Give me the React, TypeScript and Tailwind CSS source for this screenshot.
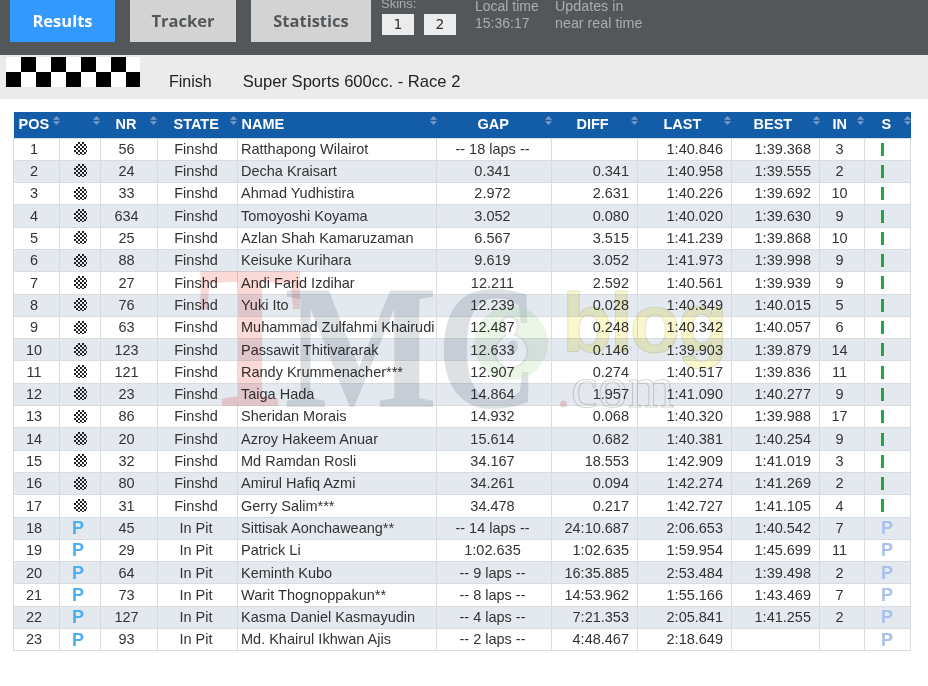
const rows = [
  ['1', 'f', '56', 'Finshd', 'Ratthapong Wilairot', '-- 18 laps --', '', '1:40.846', '1:39.368', '3'],
  ['2', 'f', '24', 'Finshd', 'Decha Kraisart', '0.341', '0.341', '1:40.958', '1:39.555', '2'],
  ['3', 'f', '33', 'Finshd', 'Ahmad Yudhistira', '2.972', '2.631', '1:40.226', '1:39.692', '10'],
  ['4', 'f', '634', 'Finshd', 'Tomoyoshi Koyama', '3.052', '0.080', '1:40.020', '1:39.630', '9'],
  ['5', 'f', '25', 'Finshd', 'Azlan Shah Kamaruzaman', '6.567', '3.515', '1:41.239', '1:39.868', '10'],
  ['6', 'f', '88', 'Finshd', 'Keisuke Kurihara', '9.619', '3.052', '1:41.973', '1:39.998', '9'],
  ['7', 'f', '27', 'Finshd', 'Andi Farid Izdihar', '12.211', '2.592', '1:40.561', '1:39.939', '9'],
  ['8', 'f', '76', 'Finshd', 'Yuki Ito', '12.239', '0.028', '1:40.349', '1:40.015', '5'],
  ['9', 'f', '63', 'Finshd', 'Muhammad Zulfahmi Khairudi', '12.487', '0.248', '1:40.342', '1:40.057', '6'],
  ['10', 'f', '123', 'Finshd', 'Passawit Thitivararak', '12.633', '0.146', '1:39.903', '1:39.879', '14'],
  ['11', 'f', '121', 'Finshd', 'Randy Krummenacher***', '12.907', '0.274', '1:40.517', '1:39.836', '11'],
  ['12', 'f', '23', 'Finshd', 'Taiga Hada', '14.864', '1.957', '1:41.090', '1:40.277', '9'],
  ['13', 'f', '86', 'Finshd', 'Sheridan Morais', '14.932', '0.068', '1:40.320', '1:39.988', '17'],
  ['14', 'f', '20', 'Finshd', 'Azroy Hakeem Anuar', '15.614', '0.682', '1:40.381', '1:40.254', '9'],
  ['15', 'f', '32', 'Finshd', 'Md Ramdan Rosli', '34.167', '18.553', '1:42.909', '1:41.019', '3'],
  ['16', 'f', '80', 'Finshd', 'Amirul Hafiq Azmi', '34.261', '0.094', '1:42.274', '1:41.269', '2'],
  ['17', 'f', '31', 'Finshd', 'Gerry Salim***', '34.478', '0.217', '1:42.727', '1:41.105', '4'],
  ['18', 'p', '45', 'In Pit', 'Sittisak Aonchaweang**', '-- 14 laps --', '24:10.687', '2:06.653', '1:40.542', '7'],
  ['19', 'p', '29', 'In Pit', 'Patrick Li', '1:02.635', '1:02.635', '1:59.954', '1:45.699', '11'],
  ['20', 'p', '64', 'In Pit', 'Keminth Kubo', '-- 9 laps --', '16:35.885', '2:53.484', '1:39.498', '2'],
  ['21', 'p', '73', 'In Pit', 'Warit Thognoppakun**', '-- 8 laps --', '14:53.962', '1:55.166', '1:43.469', '7'],
  ['22', 'p', '127', 'In Pit', 'Kasma Daniel Kasmayudin', '-- 4 laps --', '7:21.353', '2:05.841', '1:41.255', '2'],
  ['23', 'p', '93', 'In Pit', 'Md. Khairul Ikhwan Ajis', '-- 2 laps --', '4:48.467', '2:18.649', '', ''],
];

const headers = [
  { label: 'POS', w: 'w-[46px]', cls: 'pl-[5px] text-left', sort: 'left-[39px]' },
  { label: '', w: 'w-[41px]', cls: '', sort: 'left-[33px]' },
  { label: 'NR', w: 'w-[57px]', cls: 'pl-[15px] text-left', sort: 'left-[49px]' },
  { label: 'STATE', w: 'w-[80px]', cls: 'pl-[16px] text-left', sort: 'left-[72px]' },
  { label: 'NAME', w: 'w-[199px]', cls: 'pl-[4px] text-left', sort: 'left-[192px]' },
  { label: 'GAP', w: 'w-[115px]', cls: 'pl-[41px] text-left', sort: 'left-[108px]' },
  { label: 'DIFF', w: 'w-[86px]', cls: 'pl-[25px] text-left', sort: 'left-[79px]' },
  { label: 'LAST', w: 'w-[94px]', cls: 'pl-[26px] text-left', sort: 'left-[86px]' },
  { label: 'BEST', w: 'w-[88px]', cls: 'pl-[22px] text-left', sort: 'left-[81px]' },
  { label: 'IN', w: 'w-[45px]', cls: 'pl-[13px] text-left', sort: 'left-[37px]' },
  { label: 'S', w: 'w-[46px]', cls: 'pl-[17px] text-left', sort: 'left-[39px]' },
];

const SortIcon = ({ pos }: { pos: string }) => (
  <svg className={`absolute top-[4px] ${pos}`} width="7" height="9" viewBox="0 0 7 9">
    <path d="M3.5 0 7 3.7H0Z" fill="#7d9cc2" />
    <path d="M3.5 9 0 5.3H7Z" fill="#7d9cc2" />
  </svg>
);

const FinishIcon = () => (
  <svg className="mx-auto mb-px block" width="13" height="13" viewBox="0 0 13 13">
    <path d="M4 0h2v2H4zM8 0h2v2H8zM2 2h2v2H2zM6 2h2v2H6zM10 2h2v2h-2zM0 4h2v2H0zM4 4h2v2H4zM8 4h2v2H8zM12 4h1v2h-1zM2 6h2v2H2zM6 6h2v2H6zM10 6h2v2h-2zM0 8h2v2H0zM4 8h2v2H4zM8 8h2v2H8zM12 8h1v2h-1zM2 10h2v2H2zM6 10h2v2H6zM10 10h2v2h-2zM4 12h2v1H4zM8 12h2v1H8z" fill="#222" />
  </svg>
);

const Cell = ({ children, cls = '' }: { children?: React.ReactNode; cls?: string }) => (
  <td className={`border border-[#d9dde0] p-0 whitespace-nowrap overflow-hidden ${cls}`}>{children}</td>
);

const Watermark = () => (
  <div aria-hidden className="pointer-events-none absolute left-0 top-0 h-[686px] w-[928px] overflow-hidden mix-blend-multiply">
    <span className="absolute left-[198px] top-[234px] origin-left scale-x-[0.76] text-[206px] leading-none font-bold text-[#ef6a62] opacity-25 [font-family:'Liberation_Serif',serif]">T</span>
    <span className="absolute left-[284px] top-[259px] origin-left scale-x-[0.92] text-[177px] leading-none font-bold text-[#596a7a] opacity-20 [font-family:'Liberation_Serif',serif]">M</span>
    <span className="absolute left-[437px] top-[259px] origin-left scale-x-[0.8] text-[177px] leading-none font-bold text-[#596a7a] opacity-20 [font-family:'Liberation_Serif',serif]">C</span>
    <svg className="absolute left-[473px] top-[305px] opacity-40" width="76" height="76" viewBox="0 0 76 76">
      <circle cx="38" cy="38" r="37" fill="#cfe8c4" />
      <path d="M30 14c8-5 16 0 15 8l-3 8c8 2 14 10 12 20-2 9-12 15-22 12-8-3-12-12-9-20 2-6 6-9 9-11z" fill="#fff" stroke="#b9bfc4" strokeWidth="2" />
      <path d="M38 36c4-2 7 1 7 5s-3 9-7 8-5-11 0-13z" fill="#b9bfc4" />
    </svg>
    <span className="absolute left-[562px] top-[282px] text-[83px] leading-none font-bold tracking-[-3px] text-[#f5f2a8] opacity-60 [-webkit-text-stroke:1px_#d6d3a6] [font-family:'Liberation_Sans',sans-serif]">blog</span>
    <span className="absolute left-[556px] top-[357px] text-[60px] leading-none text-white opacity-35 [-webkit-text-stroke:1px_#8c8c8c] [font-family:'Liberation_Serif',serif]">
      <span className="text-[#e88a8a] [-webkit-text-stroke:0]">.</span>com
    </span>
  </div>
);

export default function App() {
  return (
    <div className="relative h-[686px] w-[928px] overflow-hidden bg-white text-[#333] [font-family:'Liberation_Sans',Arial,sans-serif]">
      <div className="flex h-[55px] bg-[#53575a]">
        <div className="ml-[10px] flex h-[42px] w-[105px] items-center justify-center bg-[#3399ff] text-[16.5px] font-bold text-white [font-family:'Open_Sans',sans-serif]">Results</div>
        <div className="ml-[15px] flex h-[42px] w-[106px] items-center justify-center bg-[#d3d3d3] text-[16.5px] font-bold text-[#53575a] [font-family:'Open_Sans',sans-serif]">Tracker</div>
        <div className="ml-[15px] flex h-[42px] w-[120px] items-center justify-center bg-[#d3d3d3] text-[16.5px] font-bold text-[#53575a] [font-family:'Open_Sans',sans-serif]">Statistics</div>
        <div className="ml-[10px] w-[94px]">
          <div className="mt-[-4px] text-[13px] leading-[15px] text-[#a9adb0]">Skins:</div>
          <div className="mt-[3px] flex gap-[10px] pl-px">
            <div className="flex h-[21px] w-[32px] items-center justify-center bg-[#ececec] text-[14px] text-[#333] [font-family:'DejaVu_Sans',sans-serif]">1</div>
            <div className="flex h-[21px] w-[32px] items-center justify-center bg-[#ececec] text-[14px] text-[#333] [font-family:'DejaVu_Sans',sans-serif]">2</div>
          </div>
        </div>
        <div className="w-[80px] text-[14px] leading-[17px] text-[#a9adb0]">
          <div className="mt-[-2px]">Local time</div>
          <div>15:36:17</div>
        </div>
        <div className="text-[14.3px] leading-[17px] text-[#a9adb0]">
          <div className="mt-[-2px]">Updates in</div>
          <div>near real time</div>
        </div>
      </div>

      <div className="flex h-[44px] bg-[#ebebeb]">
        <div className="ml-[6px] mt-[2px] grid h-[30px] w-[134px] grid-cols-[repeat(9,15px)] grid-rows-2 overflow-hidden bg-white">
          {Array.from({ length: 18 }).map((_, i) => (
            <div key={i} className={i % 2 === 1 ? 'bg-black' : 'bg-white'} />
          ))}
        </div>
        <div className="ml-[29px] mt-[16px] text-[16px] leading-[22px] text-[#222]">Finish</div>
        <div className="ml-[31px] mt-[16px] text-[16.6px] leading-[22px] text-[#222]">Super Sports 600cc. - Race 2</div>
      </div>

      <div className="pl-[13px] pt-[13px]">
        <table className="w-[897px] table-fixed border-collapse text-[14.5px] leading-none">
          <colgroup>
            {headers.map((h, i) => (
              <col key={i} className={h.w} />
            ))}
          </colgroup>
          <thead>
            <tr className="h-[26px] bg-[#135ca8] text-white">
              {headers.map((h, i) => (
                <th key={i} className={`relative p-0 pb-px font-bold ${h.cls}`}>
                  {h.label}
                  <SortIcon pos={h.sort} />
                </th>
              ))}
            </tr>
          </thead>
          <tbody>
            {rows.map((r, i) => (
              <tr key={r[0]} className={`h-[22.3px] ${i % 2 === 1 ? 'bg-[#e4e9f0]' : 'bg-white'}`}>
                <Cell cls="text-center pr-[5px]">{r[0]}</Cell>
                <Cell>
                  {r[1] === 'f' ? (
                    <FinishIcon />
                  ) : (
                    <div className="pr-[4px] text-center text-[18px] leading-none font-bold text-[#4bb0ee]">P</div>
                  )}
                </Cell>
                <Cell cls="text-center pr-[5px]">{r[2]}</Cell>
                <Cell cls="text-center pr-[3px]">{r[3]}</Cell>
                <Cell cls="pl-[3px]">{r[4]}</Cell>
                <Cell cls="text-center pr-[3px]">{r[5]}</Cell>
                <Cell cls="text-right pr-[8px]">{r[6]}</Cell>
                <Cell cls="text-right pr-[8px]">{r[7]}</Cell>
                <Cell cls="text-right pr-[8px]">{r[8]}</Cell>
                <Cell cls="text-center pr-[5px]">{r[9]}</Cell>
                <Cell cls="pl-[16px]">
                  {r[1] === 'f' ? (
                    <div className="h-[13px] w-[3px] bg-[#22a545]" />
                  ) : (
                    <div className="text-[18px] leading-none font-bold text-[#a9c0ee]">P</div>
                  )}
                </Cell>
              </tr>
            ))}
          </tbody>
        </table>
      </div>
      <Watermark />
    </div>
  );
}
